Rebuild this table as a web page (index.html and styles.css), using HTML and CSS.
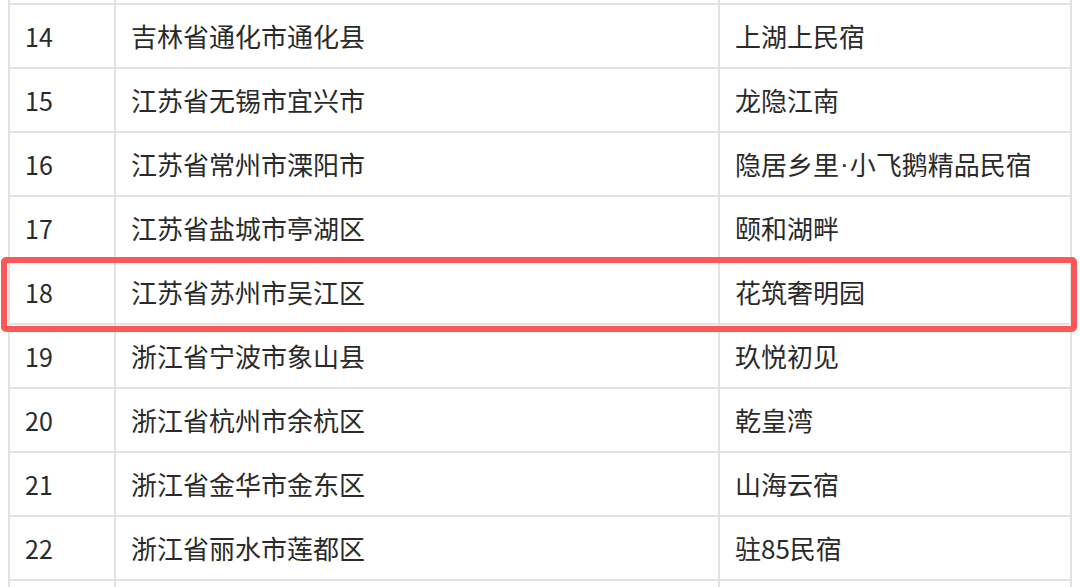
FILE: index.html
```html
<!DOCTYPE html>
<html lang="zh">
<head>
<meta charset="utf-8">
<link rel="stylesheet" href="styles.css">
</head>
<body>
<div class="wrap">
  <div class="grid">
    <div class="cell stub"></div><div class="cell stub"></div><div class="cell stub"></div>
    <div class="cell num">14</div><div class="cell">吉林省通化市通化县</div><div class="cell">上湖上民宿</div>
    <div class="cell num">15</div><div class="cell">江苏省无锡市宜兴市</div><div class="cell">龙隐江南</div>
    <div class="cell num">16</div><div class="cell">江苏省常州市溧阳市</div><div class="cell">隐居乡里<span class="dot">·</span>小飞鹅精品民宿</div>
    <div class="cell num">17</div><div class="cell">江苏省盐城市亭湖区</div><div class="cell">颐和湖畔</div>
    <div class="cell num">18</div><div class="cell">江苏省苏州市吴江区</div><div class="cell">花筑奢明园</div>
    <div class="cell num">19</div><div class="cell">浙江省宁波市象山县</div><div class="cell">玖悦初见</div>
    <div class="cell num">20</div><div class="cell">浙江省杭州市余杭区</div><div class="cell">乾皇湾</div>
    <div class="cell num">21</div><div class="cell">浙江省金华市金东区</div><div class="cell">山海云宿</div>
    <div class="cell num">22</div><div class="cell">浙江省丽水市莲都区</div><div class="cell">驻85民宿</div>
    <div class="cell"></div><div class="cell"></div><div class="cell"></div>
  </div>
  <div class="highlight"></div>
</div>
</body>
</html>
```

FILE: styles.css
```css
html, body {
  margin: 0;
  padding: 0;
  background: #fff;
}
body {
  width: 1080px;
  height: 587px;
  overflow: hidden;
  font-family: "Noto Sans CJK SC", "Noto Sans", sans-serif;
  color: #2a2a2a;
}
.wrap {
  position: relative;
  width: 1080px;
  height: 587px;
  overflow: hidden;
}
.grid {
  margin-left: 8px;
  width: 1064px;
  box-sizing: border-box;
  padding: 0 2px;
  background: #e2e2e2;
  display: grid;
  grid-template-columns: 104px 602px 350px;
  grid-template-rows: 3px;
  grid-auto-rows: 62px;
  gap: 2px;
}
.cell {
  background: #fff;
  display: flex;
  align-items: center;
  padding-left: 15px;
  font-size: 26px;
  line-height: 1;
  white-space: nowrap;
}
.cell.num {
  padding-left: 15px;
  font-size: 25px;
}
.cell.stub {
  height: 3px;
}
.dot {
  font-family: "Liberation Sans", sans-serif;
  padding: 0 1px;
}
.highlight {
  position: absolute;
  left: 1px;
  top: 257px;
  width: 1076px;
  height: 75px;
  box-sizing: border-box;
  border: 6px solid #fd5656;
  border-radius: 5px;
}
```
